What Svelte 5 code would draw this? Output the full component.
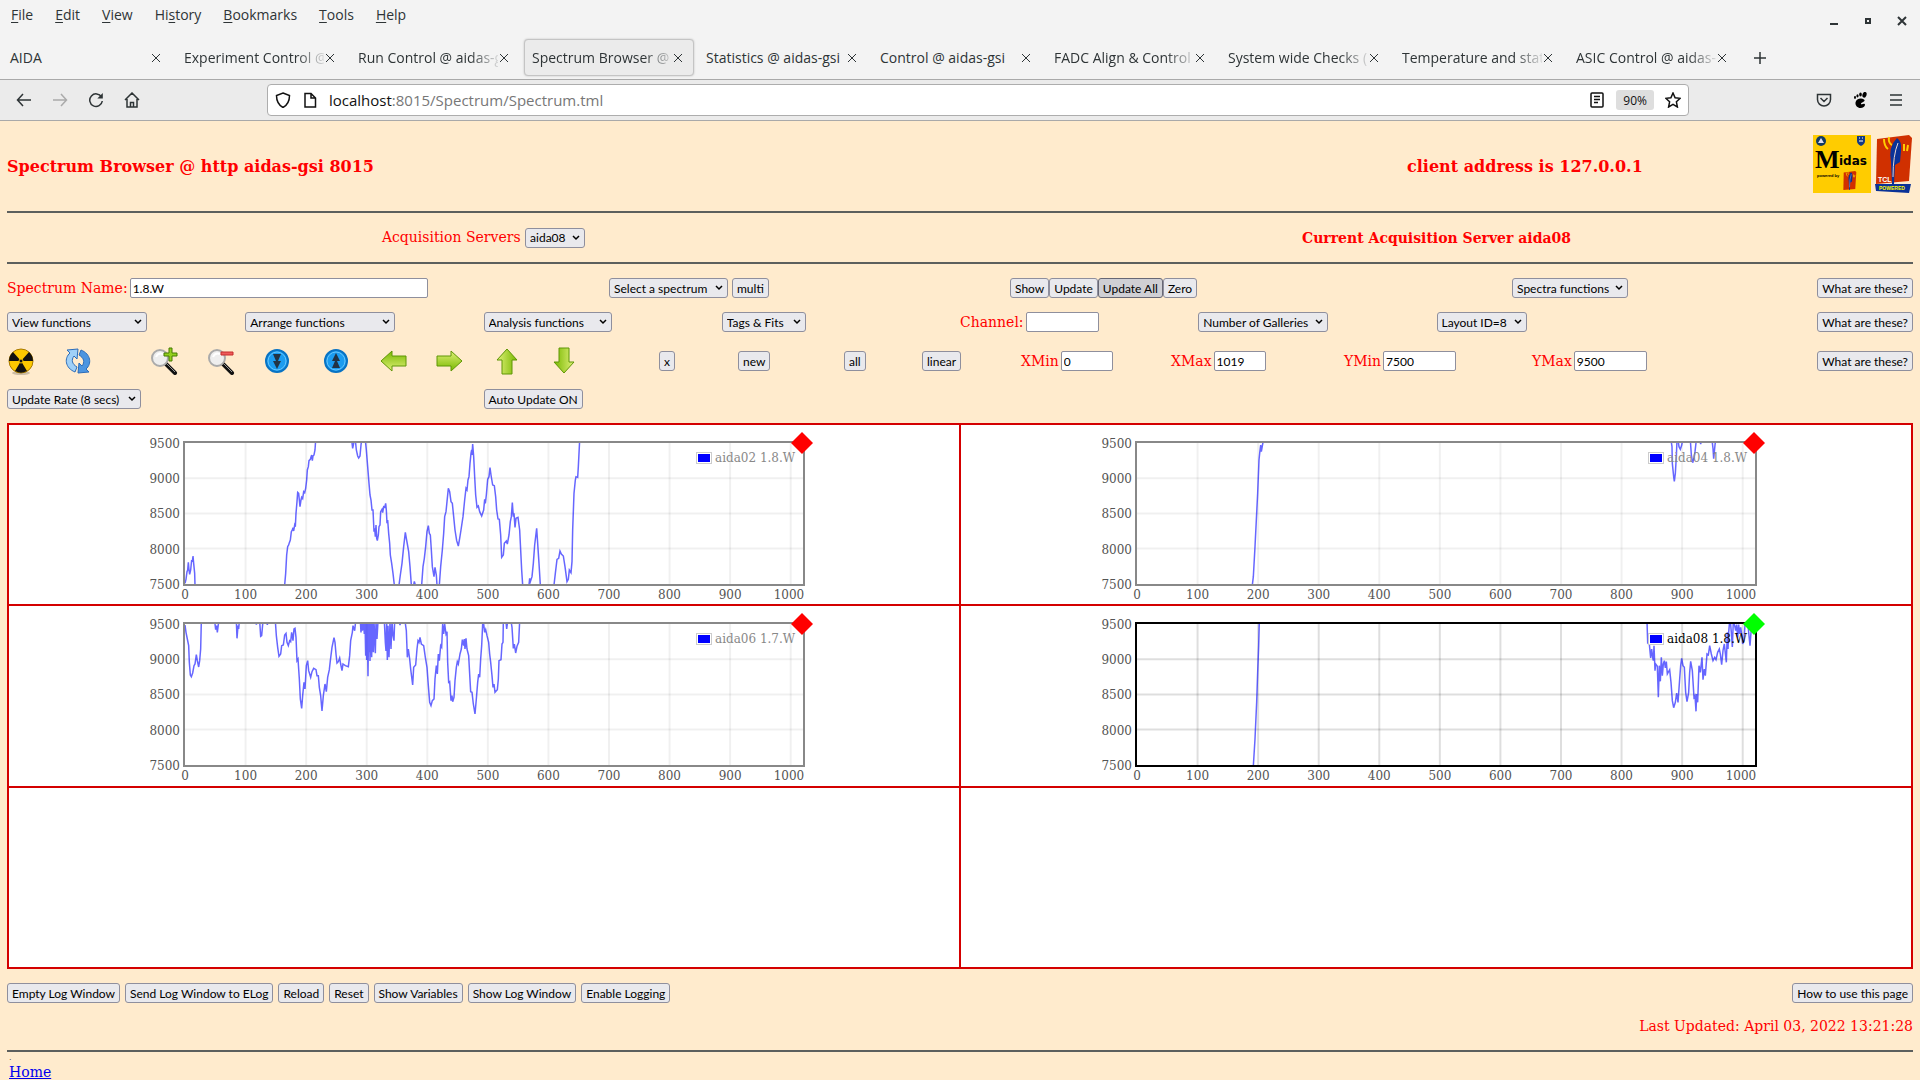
<script lang="ts">
	type Trace = { name: string; active: boolean; x0: number; y0: number; lines: string[] };

	const menus = [
		['', 'F', 'ile'],
		['', 'E', 'dit'],
		['', 'V', 'iew'],
		['Hi', 's', 'tory'],
		['', 'B', 'ookmarks'],
		['', 'T', 'ools'],
		['', 'H', 'elp']
	];

	const tabs = [
		{ title: 'AIDA', fade: false },
		{ title: 'Experiment Control @', fade: true },
		{ title: 'Run Control @ aidas-g', fade: true },
		{ title: 'Spectrum Browser @', fade: true },
		{ title: 'Statistics @ aidas-gsi', fade: false },
		{ title: 'Control @ aidas-gsi', fade: false },
		{ title: 'FADC Align & Control', fade: true },
		{ title: 'System wide Checks (', fade: true },
		{ title: 'Temperature and stat', fade: true },
		{ title: 'ASIC Control @ aidas-', fade: true }
	];
	let activeTab = $state(3);

	let spectrumName = $state('1.8.W');
	let channel = $state('');
	let xmin = $state('0');
	let xmax = $state('1019');
	let ymin = $state('7500');
	let ymax = $state('9500');

	const logButtons = ['Empty Log Window', 'Send Log Window to ELog', 'Reload', 'Reset', 'Show Variables', 'Show Log Window', 'Enable Logging'];

	const xTicks = [0, 100, 200, 300, 400, 500, 600, 700, 800, 900, 1000];
	const yTicks = [9500, 9000, 8500, 8000, 7500];
	const tickX = (v: number) => 41 + v * 0.6057;
	const tickY = (v: number) => 18 + (9500 - v) * 0.0704;

	// trace points are in thirds of a pixel, x0/y0 is the top left of the plot
	const galleries: (Trace | null)[][] = [
		[
			{
				name: 'aida02 1.8.W', active: false, x0: 164, y0: 69,
				lines: [
					'164,490 167,478 170,455 172,450 174,427 176,450 178,463 181,450 184,420 186,425 188,408 190,430 193,460 194,495',
					'463,495 466,460 469,405 472,380 475,375 477,368 480,360 483,335 486,330 488,323 490,333 493,315 495,320 497,280 500,245 502,217 505,220 507,240 509,260 512,240 514,232 517,236 520,215 523,218 526,205 529,180 531,150 534,140 536,122 540,118 544,105 546,122 548,108 551,105 554,90 556,60',
					'664,60 667,85 670,70 672,60',
					'675,60 678,90 682,108 685,114 689,108 692,75 694,60',
					'705,60 708,90 712,140 716,190 719,225 722,240 725,270 728,270 731,335 733,325 735,350 737,315 739,355 741,362 744,345 746,320 749,315 751,275 755,268 757,278 760,260 763,262 766,250 768,270 770,310 772,300 775,340 778,370 780,405 784,430 788,460 792,495',
					'806,495 810,465 815,430 820,380 825,337 828,355 831,372 835,395 839,440 843,495',
					'850,495 852,484 855,495',
					'874,495 878,440 882,415 886,380 890,335 894,317 897,340 900,345 903,390 906,440 911,470 914,442 918,465 920,495',
					'927,495 931,440 936,390 940,340 943,290 947,275 950,245 954,205 958,215 962,245 966,250 970,290 974,330 979,362 984,378 988,355 992,330 998,290 1003,240 1007,205 1010,210 1013,180 1016,170 1019,130 1022,100 1024,90 1025,105 1027,72 1030,110 1033,170 1036,225 1040,262 1044,258 1048,275 1054,288 1060,270 1063,238 1065,250 1068,225 1072,178 1076,170 1079,143 1082,165 1087,195 1092,197 1096,230 1099,270 1103,297 1107,298 1111,345 1114,412 1119,405 1122,370 1128,363 1131,372 1136,345 1140,305 1143,290 1146,248 1149,290 1151,280 1154,322 1157,295 1163,292 1168,330 1171,390 1174,450 1177,495',
					'1196,495 1198,475 1200,485 1205,470 1209,430 1213,375 1219,325 1222,370 1226,430 1230,495',
					'1271,495 1275,460 1280,418 1285,415 1289,393 1293,402 1299,408 1304,440 1310,485 1314,478 1317,450 1322,458 1325,425 1327,330 1331,220 1335,180 1337,170 1342,172 1344,140 1348,60'
				]
			},
			{
				name: 'aida04 1.8.W', active: false, x0: -1450, y0: 69,
				lines: [
					'-1104,495 -1101,470 -1096,380 -1092,300 -1088,220 -1084,120 -1082,100 -1079,75 -1077,95 -1073,72 -1070,60',
					'152,60 155,80 156,130 160,170 162,184 165,160 168,110 170,60',
					'173,60 176,80 180,88 184,76 187,60',
					'210,60 213,105 217,128 221,115 224,95 228,60',
					'238,60 241,72 244,60',
					'275,60 278,85 280,116 284,75 286,60'
				]
			}
		],
		[
			{
				name: 'aida06 1.7.W', active: false, x0: 164, y0: 75,
				lines: [
					'164,78 167,100 171,120 175,140 177,190 180,228 183,233 187,222 191,200 194,195 198,167 201,185 205,204 208,185 211,150 213,66',
					'253,66 256,92 259,80 261,100 264,76 266,66',
					'318,66 320,118 323,80 325,90 327,66',
					'376,66 378,77 381,66',
					'388,66 391,112 394,110 397,76 399,66',
					'409,66 411,78 413,66',
					'435,66 438,110 442,145 446,172 451,165 454,140 459,138 463,108 467,103 470,130 474,140 478,125 481,128 484,100 488,125 491,90 494,88 497,115 500,185 503,180 507,240 510,300 514,328 517,290 521,250 524,270 528,200 532,185 535,215 541,235 545,218 550,208 557,212 560,230 564,230 567,265 571,290 575,336 579,290 584,255 588,278 592,235 597,212 600,185 605,145 611,116 614,130 617,165 620,192 624,188 628,177 631,195 635,215 638,195 645,200 654,203 658,170 661,125 666,100 668,80 673,95 676,66',
					'690,66 692,100 694,66 696,95 699,66 702,105 704,66 706,170 708,66 709,183 711,66 713,232 715,66 717,160 718,66 719,186 721,66 724,175 726,66 729,160 731,66 735,163 737,66 740,120 743,66',
					'762,66 765,130 767,156 769,66 771,183 773,80 776,175 779,66 782,150 785,66 788,110 791,125 793,66',
					'806,66 809,78 812,66',
					'824,66 828,95 831,175 834,150 838,180 841,210 847,258 850,205 856,198 860,150 863,125 866,130 869,115 873,135 880,140 885,175 890,205 894,260 898,310 902,320 906,305 911,300 914,240 918,200 921,225 924,165 927,185 931,140 934,145 937,75 940,105 943,75 947,105 950,98 952,190 955,250 958,248 962,305 965,290 967,308 971,295 974,245 978,205 981,188 984,195 989,165 993,150 996,122 1000,140 1002,120 1004,150 1007,118 1010,150 1015,170 1018,225 1021,278 1025,280 1029,315 1034,345 1038,300 1042,250 1045,225 1048,235 1051,180 1054,140 1057,75 1060,75 1063,100 1066,92 1070,110 1075,130 1078,165 1081,190 1085,230 1088,265 1091,255 1094,280 1101,272 1104,240 1106,185 1112,182 1115,135 1118,130 1119,66',
					'1127,66 1129,90 1132,66',
					'1142,66 1145,85 1149,148 1152,135 1156,162 1160,142 1165,130 1168,66'
				]
			},
			{
				name: 'aida08 1.8.W', active: true, x0: -1450, y0: 615,
				lines: [
					'-1101,1041 -1096,960 -1091,850 -1088,760 -1085,680 -1083,606',
					'80,606 82,670 86,665 91,717 94,690 97,715 99,725 101,680 104,755 106,735 111,742 114,835 117,740 120,787 123,715 126,770 129,735 132,725 135,747 138,728 141,765 148,752 152,790 156,845 160,866 165,850 169,822 173,850 178,780 181,740 184,718 188,740 192,745 196,820 200,848 205,820 208,760 211,727 216,755 221,835 224,830 227,877 229,825 232,850 236,740 240,760 245,715 248,782 252,750 255,770 260,705 264,708 268,680 273,705 278,725 283,715 287,722 292,700 297,690 300,705 304,737 308,695 312,675 318,730 321,640 323,690 325,640 328,606',
					'330,606 333,640 336,684 339,606 343,620 346,635 349,617 352,655 355,617 358,645 361,625 364,645 367,675 371,665 374,617 377,606',
					'382,606 386,650 389,680 392,640 394,606'
				]
			}
		],
		[null, null]
	];
</script>

{#snippet picker(label: string, width: number)}
	<select aria-label={label} style:width="{width}px"><option>{label}</option></select>
{/snippet}

{#snippet feather()}
	<path d="M2 4 34 0 37 3 34 46 1 49Z" fill="#d03000" />
	<path d="M9 4q0 7 4 10M14 2q-1 6 3 8M29 9v7M33 10l-1 6" stroke="#fc0" stroke-width="2" fill="none" />
	<path d="M17 49 16 27q-3-15 6-24 5 3 4 13l-1 11-5 3-1 19Z" fill="#0a3297" />
	<path d="M18 42q0-22 5-34" stroke="#e8d6d0" fill="none" />
{/snippet}

{#snippet chart(g: Trace)}
	<svg class="chart" class:active={g.active} viewBox="0 0 680 178" role="img" aria-label={g.name}>
		<g class="grid">
			{#each xTicks.slice(1) as t}
				<line x1={tickX(t)} x2={tickX(t)} y1="18" y2="159" />
			{/each}
			{#each yTicks.slice(1, 4) as t}
				<line x1="41" x2="659" y1={tickY(t)} y2={tickY(t)} />
			{/each}
		</g>
		<svg x="41" y="18" width="618" height="141" viewBox="{g.x0} {g.y0} 1854 423" preserveAspectRatio="none">
			{#each g.lines as points}
				<polyline class="trace" {points} />
			{/each}
		</svg>
		<rect class="frame" x="40" y="17" width="620" height="143" />
		<g class="ticks">
			{#each xTicks as t}
				<text x={t === 1000 ? 645 : tickX(t)} y="174" text-anchor="middle">{t}</text>
			{/each}
			{#each yTicks as t}
				<text x="36" y={tickY(t) + 5} text-anchor="end">{t}</text>
			{/each}
		</g>
		<rect x="552.5" y="27.5" width="15" height="11" fill="#fff" stroke="#ccc" />
		<rect x="554" y="29" width="12" height="8" fill="#00f" />
		<text class="legend" x="571" y="37">{g.name}</text>
		<path class="marker" d="M658 7l11 11-11 11-11-11z" />
	</svg>
{/snippet}

<div class="browser">
	<nav class="menubar">
		{#each menus as [pre, key, post]}
			<button>{pre}<u>{key}</u>{post}</button>
		{/each}
		<div class="window">
			<button aria-label="Minimize"><svg viewBox="0 0 10 10"><path d="M1 8h8" stroke-width="2" /></svg></button>
			<button aria-label="Maximize"><svg viewBox="0 0 10 10"><path d="M3 3h4v4H3z" stroke-width="2" /></svg></button>
			<button aria-label="Close window"><svg viewBox="0 0 10 10"><path d="m1 1 8 8M9 1 1 9" stroke-width="2" /></svg></button>
		</div>
	</nav>

	<div class="tabs">
		{#each tabs as tab, i}
			<div class="tab" class:selected={i === activeTab}>
				<button class="title" class:fade={tab.fade} onclick={() => (activeTab = i)}>{tab.title}</button>
				<button class="close" aria-label="Close tab"><svg viewBox="0 0 10 10"><path d="m1 1 8 8M9 1 1 9" /></svg></button>
			</div>
		{/each}
		<button class="add" aria-label="New tab"><svg viewBox="0 0 14 14"><path d="M7 1v12M1 7h12" /></svg></button>
	</div>

	<div class="toolbar">
		<div class="nav">
			<button aria-label="Back"><svg viewBox="0 0 16 16"><path d="M15 8H1.500M7 2 1.500 8 7 14" /></svg></button>
			<button aria-label="Forward" disabled><svg viewBox="0 0 16 16"><path d="M1 8h13.500M9 2l5.500 6L9 14" /></svg></button>
			<button aria-label="Reload"><svg viewBox="0 0 16 16"><path d="M13.500 5A6.300 6.300 0 1 0 14.300 9" /><path d="M14.800 1v5.500H9.300z" fill="currentColor" stroke="none" /></svg></button>
			<button aria-label="Home"><svg viewBox="0 0 16 16"><path d="M1 8 8 1l7 7M3 7v8h10V7M6.500 15v-4.500h3V15" /></svg></button>
		</div>
		<div class="address">
			<svg class="icon" viewBox="0 0 16 16"><path d="M8 1 14.500 3.500C14.500 9 12.500 13 8 15.500 3.500 13 1.500 9 1.500 3.500Z" /></svg>
			<svg class="icon" viewBox="0 0 16 16"><path d="M3 1.500h6l4.500 4.500v9H3zM9 1.500V6h4.500" /></svg>
			<div class="url"><b>localhost</b>:8015/Spectrum/Spectrum.tml</div>
			<button aria-label="Reader view"><svg class="icon" viewBox="0 0 16 16"><rect x="2" y="1" width="12" height="14" rx="1" /><path d="M5 4.500h6M5 7.500h6M5 10.500h4" /></svg></button>
			<button class="zoom">90%</button>
			<button aria-label="Bookmark"><svg class="icon" viewBox="0 0 16 16"><path d="m8 1 2.100 4.700 5.100.600-3.800 3.500 1 5.200L8 12.400 3.600 15l1-5.200L.800 6.300l5.100-.600z" /></svg></button>
		</div>
		<div class="tools">
			<button aria-label="Pocket"><svg viewBox="0 0 16 16"><path d="M1.500 2.500h13v5a6.500 6.500 0 0 1-13 0zM4.500 6 8 9.500 11.500 6" /></svg></button>
			<button aria-label="Gnome extensions">
				<svg viewBox="0 0 16 16">
					<g fill="#000" stroke="none">
						<ellipse cx="12.500" cy="2.800" rx="2" ry="3" transform="rotate(20 12.500 2.800)" /><ellipse cx="8.500" cy="2.600" rx="1.300" ry="2" /><ellipse cx="5.500" cy="3.800" rx="1.100" ry="1.600" /><ellipse cx="3" cy="5.500" rx="1" ry="1.400" />
						<path d="M12 7.500C9 5.500 4 7 3.500 10.500c-.400 3 2 5.500 5 5.500 2.500 0 4.500-1.500 4.500-3.200s-2-1.200-3-.600-1.800-1 .200-1.800 3.300-2 1.800-2.900z" />
					</g>
				</svg>
			</button>
			<button aria-label="Menu"><svg viewBox="0 0 16 16"><path d="M2 3h12M2 8h12M2 13h12" /></svg></button>
		</div>
	</div>
</div>

<main>
	<header>
		<h1>Spectrum Browser @ http aidas-gsi 8015</h1>
		<h1>client address is 127.0.0.1</h1>
		<div class="logos">
			<svg width="58" height="58" viewBox="0 0 58 58" role="img" aria-label="Midas">
				<path d="M0 0h58v58H0z" fill="#fc0" />
				<circle cx="8" cy="6" r="5" fill="#123a63" /><path d="m5 8 3-5 3 5z" fill="#dde" />
				<path d="M44 1h8v5q0 3-4 5-4-2-4-5z" fill="#123a86" /><path d="M46 3h1m2 0h1M46 6h4" stroke="#fff" />
				<text x="2" y="33" class="big">M</text>
				<text x="26" y="30" class="small">idas</text>
				<text x="4" y="42" class="tiny">powered by</text>
				<g transform="translate(30 36) scale(.36 .39)">{@render feather()}</g>
			</svg>
			<svg width="38" height="58" viewBox="0 0 38 58" role="img" aria-label="Tcl powered">
				{@render feather()}
				<text x="3" y="47" class="tcl">TCL</text>
				<path d="M0 49h36l-2 9L1 56z" fill="#0a3297" />
				<text x="4" y="55" class="powered">POWERED</text>
			</svg>
		</div>
	</header>
	<hr />
	<section class="server">
		<label>Acquisition Servers <select style:width="60px"><option>aida08</option></select></label>
		<strong>Current Acquisition Server aida08</strong>
	</section>
	<hr />

	<section class="controls">
		<div class="row names">
			<label class="field">Spectrum Name:<input class="long" bind:value={spectrumName} /></label>
			<div class="spaced">{@render picker('Select a spectrum', 119)}<button>multi</button></div>
			<div><button>Show</button><button>Update</button><button class="pressed">Update All</button><button>Zero</button></div>
			<div>{@render picker('Spectra functions', 116)}</div>
			<button class="help">What are these?</button>
		</div>
		<div class="row eighths">
			<div>{@render picker('View functions', 140)}</div>
			<div>{@render picker('Arrange functions', 150)}</div>
			<div>{@render picker('Analysis functions', 128)}</div>
			<div>{@render picker('Tags & Fits', 84)}</div>
			<label class="field">Channel:<input class="medium" bind:value={channel} /></label>
			<div>{@render picker('Number of Galleries', 130)}</div>
			<div>{@render picker('Layout ID=8', 90)}</div>
			<button class="help">What are these?</button>
		</div>
		<div class="row actions">
			<button class="tool" aria-label="Clear">
				<svg viewBox="0 0 28 28">
					<ellipse cx="14" cy="26" rx="9" ry="2" fill="#0003" />
					<circle cx="14" cy="14" r="12" fill="#fcc800" stroke="#a87900" />
					<path d="M14 14 8 4a12 12 0 0 1 12 0zM14 14H2a12 12 0 0 0 4 9zM14 14h12a12 12 0 0 1-4 9z" fill="#111" transform="rotate(180 14 14)" />
					<circle cx="14" cy="14" r="2" fill="#111" stroke="#fcc800" />
				</svg>
			</button>
			<button class="tool" aria-label="Refresh">
				<svg viewBox="0 0 28 28" stroke="#2c6cb8">
					<path d="M11 25C1 21 0 11 6 6L3 3l11-1-1 10-3-3c-3 4-2 8 3 11z" fill="#9fd0f8" />
					<path d="M17 3c10 4 11 14 5 19l3 3-11 1 1-10 3 3c3-4 2-8-3-11z" fill="#4c95e0" />
				</svg>
			</button>
			<button class="tool" aria-label="Zoom in">
				<svg viewBox="0 0 28 28">
					<path d="m16 17 9 9" stroke="#111" stroke-width="4" stroke-linecap="round" /><path d="m17 17 8 8" stroke="#999" />
					<circle cx="10" cy="11" r="8" fill="#eee" stroke="#aaa" stroke-width="2" /><path d="M6 10q2-5 7-3" stroke="#fff" stroke-width="2" fill="none" />
					<path d="M19 1h3v5h5v3h-5v5h-3V9h-5V6h5z" fill="#93cf1d" stroke="#447b00" />
				</svg>
			</button>
			<button class="tool" aria-label="Zoom out">
				<svg viewBox="0 0 28 28">
					<path d="m16 17 9 9" stroke="#111" stroke-width="4" stroke-linecap="round" /><path d="m17 17 8 8" stroke="#999" />
					<circle cx="10" cy="11" r="8" fill="#eee" stroke="#aaa" stroke-width="2" /><path d="M6 10q2-5 7-3" stroke="#fff" stroke-width="2" fill="none" />
					<path d="M14 5h12v3H14z" fill="#ed5b5b" stroke="#c62d2d" />
				</svg>
			</button>
			<button class="tool" aria-label="Shrink vertically">
				<svg viewBox="0 0 28 28">
					<circle cx="14" cy="14" r="11" fill="#1b9cf0" stroke="#0873c4" stroke-width="2" /><circle cx="14" cy="14" r="9" fill="none" stroke="#66c5fb" />
					<path d="M10 7h8l-3 7h3l-4 8-4-8h3z" fill="#234" />
				</svg>
			</button>
			<button class="tool" aria-label="Expand vertically">
				<svg viewBox="0 0 28 28">
					<circle cx="14" cy="14" r="11" fill="#1b9cf0" stroke="#0873c4" stroke-width="2" /><circle cx="14" cy="14" r="9" fill="none" stroke="#66c5fb" />
					<path d="M10 21h8l-3-7h3l-4-8-4 8h3z" fill="#234" />
				</svg>
			</button>
			{#each [['Left', 180], ['Right', 0], ['Up', -90], ['Down', 90]] as [dir, angle]}
				<button class="tool" aria-label={dir}>
					<svg viewBox="0 0 28 28">
						<defs><linearGradient id="leaf-{dir}" x2="0" y2="1"><stop stop-color="#dff077" /><stop offset="1" stop-color="#78b800" /></linearGradient></defs>
						<path d="M1 9h14V4l11 10-11 10v-5H1z" fill="url(#leaf-{dir})" stroke="#5f9606" transform="rotate({angle} 14 14)" />
					</svg>
				</button>
			{/each}
			<div><button>x</button></div>
			<div><button>new</button></div>
			<div><button>all</button></div>
			<div><button>linear</button></div>
			<label class="field">XMin<input class="short" bind:value={xmin} /></label>
			<label class="field">XMax<input class="short" bind:value={xmax} /></label>
			<label class="field">YMin<input class="medium" bind:value={ymin} /></label>
			<label class="field">YMax<input class="medium" bind:value={ymax} /></label>
			<button class="help">What are these?</button>
		</div>
		<div class="row eighths">
			<div class="double">{@render picker('Update Rate (8 secs)', 134)}</div>
			<div><button>Auto Update ON</button></div>
		</div>
	</section>

	<table>
		<tbody>
			{#each galleries as row}
				<tr>
					{#each row as g}
						<td>{#if g}{@render chart(g)}{/if}</td>
					{/each}
				</tr>
			{/each}
		</tbody>
	</table>

	<div class="log">
		{#each logButtons as b}
			<button>{b}</button>
		{/each}
		<button class="help">How to use this page</button>
	</div>
	<p class="updated">Last Updated: April 03, 2022 13:21:28</p>
	<hr />
	<footer><span>.</span><a href="#home">Home</a></footer>
</main>

<style>
	:global(body) {
		background: #ffebcd;
	}

	button, input, select {
		font-family: Lato, "Open Sans", sans-serif;
		font-size: 12px;
		color: #000;
		margin: 0;
		box-sizing: border-box;
	}

	/* Browser chrome */
	.browser {
		font-family: "Open Sans", "Noto Sans", sans-serif;
		background: #f3f3f3;
		color: #2e3436;
	}

	.browser button {
		border: 0;
		padding: 0;
		background: none;
		color: inherit;
		font-family: inherit;
		font-size: 14px;
		display: flex;
		align-items: center;
		white-space: nowrap;
	}

	.browser svg {
		width: 16px;
		height: 16px;
		fill: none;
		stroke: currentColor;
		stroke-width: 1.5;
	}

	.menubar {
		display: flex;
		height: 29px;
		align-items: center;
	}

	.menubar > button {
		padding: 0 11px;
	}

	.menubar u {
		text-underline-offset: 2px;
	}

	.window {
		display: flex;
		align-items: flex-end;
		gap: 24px;
		height: 22px;
		margin-left: auto;
		padding-right: 13px;
	}

	.window svg {
		width: 10px;
		height: 10px;
	}

	.tabs {
		display: flex;
		height: 51px;
		box-sizing: border-box;
		align-items: center;
		padding-top: 7px;
		border-bottom: 1px solid #a9a9a9;
	}

	.tab {
		flex: 0 1 170px;
		min-width: 0;
		height: 37px;
		box-sizing: border-box;
		display: flex;
		align-items: center;
		justify-content: space-between;
		margin: 0 2px;
		padding: 0 10px 0 7px;
		border: 1px solid transparent;
		border-radius: 4px;
	}

	.tab.selected {
		background: #ebebeb;
		border-color: #c4c4c4;
		box-shadow: 0 0 2px #bbb;
	}

	.tab .title {
		width: 140px;
	}

	.tab .fade {
		mask-image: linear-gradient(to right, #000 112px, transparent 144px);
	}

	.tab .close svg {
		width: 10px;
		height: 10px;
		stroke-width: 1;
	}

	.tabs .add {
		margin-left: 13px;
	}

	.add svg {
		width: 14px;
		height: 14px;
	}

	.toolbar {
		height: 40px;
		display: grid;
		grid-template-columns: minmax(0, 267fr) minmax(0, 1422fr) minmax(0, 231fr);
		align-items: center;
		background: #ebebeb;
		border-bottom: 1px solid #a9a9a9;
	}

	.nav {
		display: flex;
		gap: 20px;
		padding-left: 16px;
	}

	.nav button:disabled {
		color: #aaa;
	}

	.address {
		height: 32px;
		box-sizing: border-box;
		display: flex;
		align-items: center;
		gap: 11px;
		padding: 0 7px;
		background: #fff;
		border: 1px solid #adadad;
		border-radius: 4px;
		color: #111;
	}

	.url {
		flex: 1;
		font-size: 15px;
		color: #777;
	}

	.url b {
		font-weight: 400;
		color: #111;
	}

	.browser .zoom {
		font-size: 12px;
		height: 20px;
		padding: 0 7px;
		background: #dedede;
		border-radius: 3px;
	}

	.tools {
		display: flex;
		justify-content: flex-end;
		gap: 20px;
		padding-right: 16px;
	}

	/* Page */
	main {
		padding: 0 7px;
		font-family: "DejaVu Serif", serif;
		font-size: 14px;
		color: #f00;
	}

	header {
		display: grid;
		grid-template-columns: minmax(0, 1400fr) minmax(0, 406fr) auto;
		align-items: center;
		height: 90px;
	}

	h1 {
		margin: 0;
		font-size: 16px;
	}

	.logos {
		display: flex;
		gap: 4px;
		align-self: start;
		padding-top: 14px;
	}

	.logos text {
		font-family: "Liberation Sans", sans-serif;
		font-weight: 700;
	}

	.logos .big {
		font-family: "Liberation Serif", serif;
		font-size: 26px;
	}

	.logos .small {
		font-family: "DejaVu Sans", sans-serif;
		font-size: 12px;
	}

	.logos .tiny {
		font-size: 4px;
	}

	.logos .tcl {
		font-size: 7px;
		fill: #fff;
	}

	.logos .powered {
		font-size: 5px;
		fill: #ff0;
	}

	hr {
		height: 2px;
		margin: 0;
		border: 0;
		background: #5c5f5d;
	}

	.server {
		display: grid;
		grid-template-columns: 1fr 1fr;
		align-items: center;
		text-align: center;
		height: 49px;
	}

	main button, main select {
		height: 20px;
		padding: 0 4px;
		background: #e9e9ed;
		border: 1px solid #8f8f9d;
		border-radius: 3px;
		white-space: nowrap;
		vertical-align: middle;
	}

	main select {
		appearance: none;
		background: #e9e9ed url("data:image/svg+xml,%3Csvg xmlns='http://www.w3.org/2000/svg' width='8' height='6'%3E%3Cpath d='M1 1l3 3 3-3' fill='none' stroke='%23000' stroke-width='1.500'/%3E%3C/svg%3E") no-repeat right 4px center;
	}

	main button.pressed {
		background: #cfcfd4;
		border-color: #676774;
	}

	main input {
		height: 20px;
		padding: 0 2px;
		border: 1px solid #8f8f9d;
		border-radius: 2px;
		background: #fff;
	}

	.long {
		width: 298px;
	}

	.medium {
		width: 73px;
	}

	.short {
		width: 52px;
	}

	.controls {
		padding-top: 14px;
	}

	.row {
		display: grid;
		align-items: center;
		height: 20px;
		margin-bottom: 14px;
	}

	.row > div {
		display: flex;
	}

	.row .spaced {
		gap: 4px;
	}

	.names {
		grid-template-columns: minmax(0, 602fr) minmax(0, 401fr) minmax(0, 502fr) minmax(0, 290fr) minmax(0, 111fr);
	}

	.eighths {
		grid-template-columns: repeat(8, minmax(0, 1fr));
	}

	.double {
		grid-column: span 2;
	}

	.actions {
		height: 28px;
		margin: 15px 0 14px;
		grid-template-columns:
			minmax(0, 57fr) minmax(0, 86fr) minmax(0, 57fr) minmax(0, 56fr) minmax(0, 59fr)
			minmax(0, 57fr) minmax(0, 57fr) minmax(0, 57fr) minmax(0, 57fr) minmax(0, 109fr)
			minmax(0, 79fr) minmax(0, 106fr) minmax(0, 78fr) minmax(0, 99fr) minmax(0, 150fr)
			minmax(0, 173fr) minmax(0, 188fr) minmax(0, 270fr) minmax(0, 111fr);
	}

	.field {
		display: flex;
		align-items: center;
		gap: 2px;
		white-space: nowrap;
	}

	main .help {
		justify-self: end;
	}

	main .tool {
		width: 28px;
		height: 28px;
		padding: 0;
		border: 0;
		background: none;
	}

	.tool svg {
		display: block;
		width: 28px;
		height: 28px;
	}

	table {
		width: 100%;
		height: 546px;
		table-layout: fixed;
		border-collapse: collapse;
		background: #fff;
		margin-top: 14px;
	}

	td {
		height: 179px;
		padding: 0;
		border: 2px solid #d40000;
		text-align: center;
		vertical-align: top;
	}

	.chart {
		display: block;
		width: 680px;
		max-width: 100%;
		margin: 0 auto;
		font-size: 12px;
	}

	.grid line {
		stroke: #000;
		stroke-opacity: 0.06;
		stroke-width: 2;
	}

	.active .grid line {
		stroke-opacity: 0.13;
	}

	.frame {
		fill: none;
		stroke: #888;
		stroke-width: 2;
	}

	.active .frame {
		stroke: #000;
	}

	.trace {
		fill: none;
		stroke: #00f;
		stroke-opacity: 0.6;
		stroke-width: 1.5;
		vector-effect: non-scaling-stroke;
	}

	.ticks {
		fill: #545454;
	}

	.legend {
		fill: #888;
	}

	.active .legend {
		fill: #000;
	}

	.marker {
		fill: #f00;
	}

	.active .marker {
		fill: #0f0;
	}

	.log {
		display: flex;
		gap: 5px;
		margin-top: 14px;
	}

	.log .help {
		margin-left: auto;
	}

	.updated {
		margin: 14px 0 15px;
		line-height: 18px;
		text-align: right;
	}

	footer {
		display: flex;
		flex-direction: column;
		padding-left: 2px;
	}

	footer span {
		font-size: 8px;
		line-height: 12px;
		color: #333;
	}

	footer a {
		align-self: flex-start;
		line-height: 16px;
		color: #00e;
	}
</style>
